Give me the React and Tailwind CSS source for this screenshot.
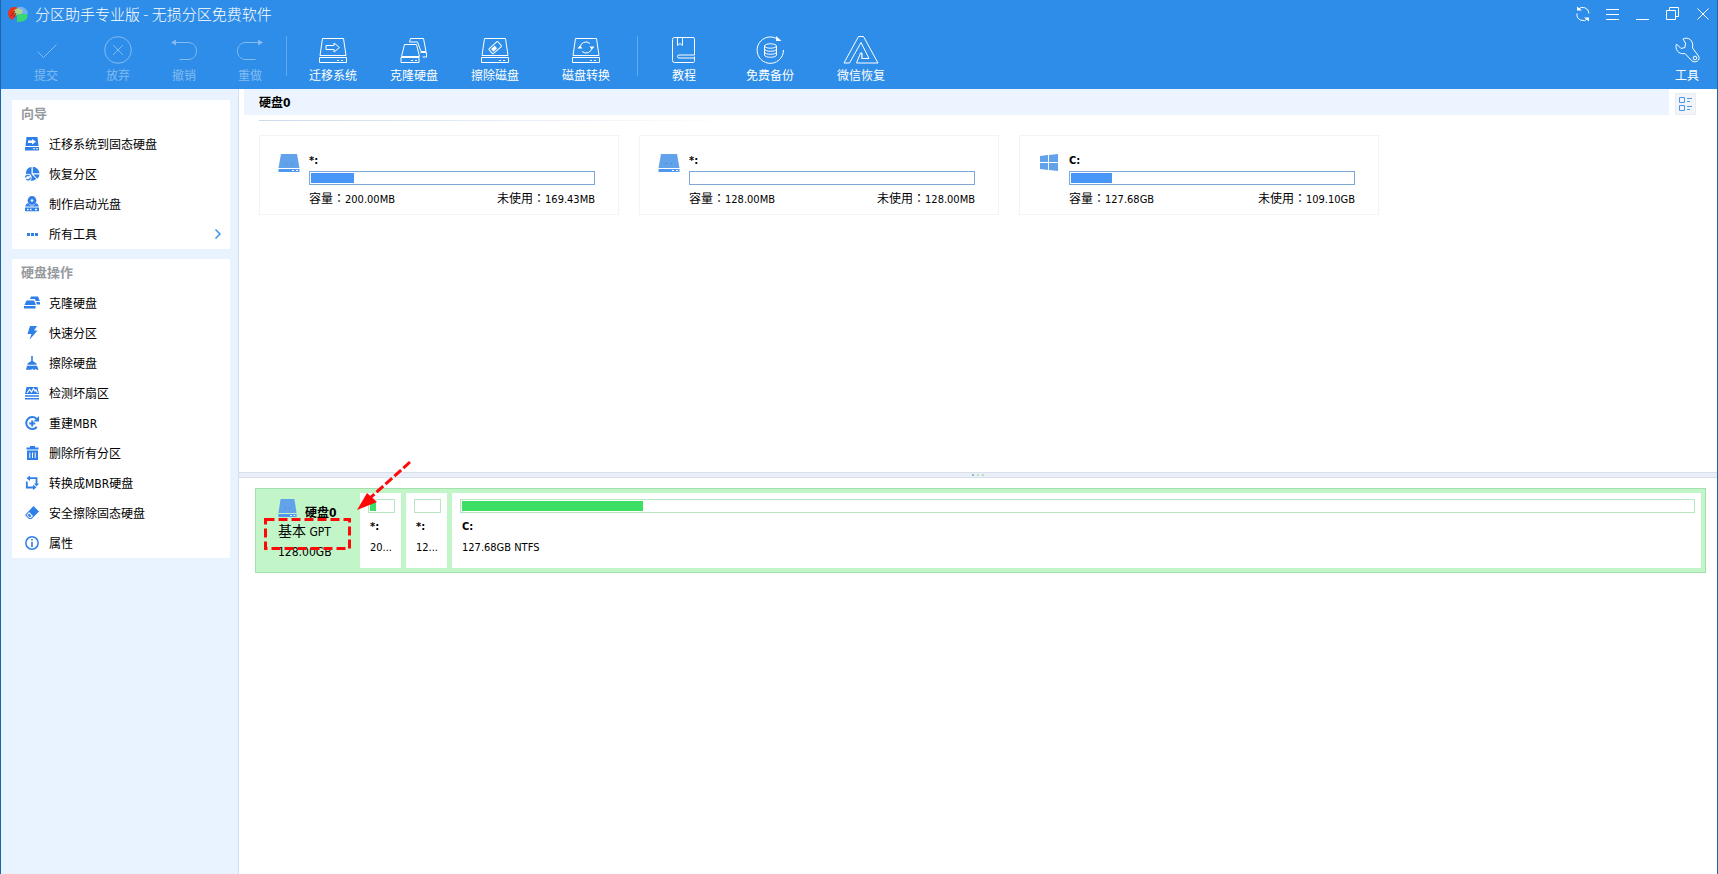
// App.jsx
import React from "react";

/* ---------- toolbar icons ---------- */

const Line = ({ children, w = 28, className = "" }) => (
  <svg
    width={w}
    height="28"
    viewBox={`0 0 ${w} 28`}
    fill="none"
    stroke="currentColor"
    strokeWidth="1"
    className={className}
    aria-hidden="true"
  >
    {children}
  </svg>
);

const DiskFrame = () => (
  <>
    <path d="M3.500 2.500h21l2.500 17H1z" />
    <path d="M.500 21.500h27v5h-27z" />
    <path d="M18 24.500h2M22 24.500h2" />
  </>
);

const CommitIcon = () => (
  <Line>
    <path d="M5.500 15.500l6 6L24.500 8.500" />
  </Line>
);

const DiscardIcon = () => (
  <Line>
    <circle cx="14" cy="14" r="13.300" />
    <path d="M9 9l10 10M19 9L9 19" />
  </Line>
);

const UndoIcon = () => (
  <Line>
    <path d="M4 6.500h15c10 1 10 16 0 17H9.500" />
    <path d="M1 6.500l5-3v6z" fill="currentColor" stroke="none" />
  </Line>
);

const RedoIcon = () => (
  <Line>
    <path d="M24 6.500H9c-10 1-10 16 0 17h10.500" />
    <path d="M27 6.500l-5-3v6z" fill="currentColor" stroke="none" />
  </Line>
);

const MigrateIcon = () => (
  <Line>
    <DiskFrame />
    <path d="M7 9.500h8V7l5.500 4.500L15 16v-2.500H7z" />
  </Line>
);

const CloneIcon = () => (
  <Line>
    <path d="M4.500 8.500h12l3 12H1.500z" />
    <path d="M1 21.500h18v5H1z" />
    <path d="M11 24.500h2M15 24.500h2" />
    <path d="M9.500 6l1-3.500h13l2.500 13h-5L17.500 6z" />
    <path d="M20.500 16.500H26.500v4.500h-4" />
  </Line>
);

const WipeIcon = () => (
  <Line>
    <DiskFrame />
    <g transform="rotate(-42 14 11.500)">
      <rect x="8" y="8.500" width="12" height="6.500" rx="1" />
      <rect x="10" y="10" width="5" height="3.500" fill="currentColor" stroke="none" />
    </g>
  </Line>
);

const ConvertIcon = () => (
  <Line>
    <DiskFrame />
    <path d="M8 11.500a6 6 0 0 1 10-4M20 11.500a6 6 0 0 1-10 4" />
    <path d="M17.500 10.500h5L20 13.500zM5.500 12.500h5L8 9.500z" fill="currentColor" stroke="none" />
  </Line>
);

const BookIcon = () => (
  <Line>
    <path d="M24.500 20.500v4a1.500 1.500 0 0 1-1.500 2H4.500a2 2 0 0 1-2-2v-21a2 2 0 0 1 2-2H23a1.500 1.500 0 0 1 1.500 1.500v16H9a1.500 1.500 0 0 0 0 3h15" />
    <path d="M7.500 1.500v8l2.500-2 2.500 2v-8" />
  </Line>
);

const BackupIcon = () => (
  <Line>
    <path d="M20.500 2.500A13.200 13.200 0 1 0 27.500 14" />
    <path d="M20 0v5h5.500z" fill="currentColor" stroke="none" />
    <ellipse cx="14.500" cy="10" rx="6" ry="2.200" />
    <path d="M8.500 10v9c0 3 12 3 12 0v-9M8.500 13c0 3 12 3 12 0M8.500 16c0 3 12 3 12 0" />
  </Line>
);

const WechatIcon = () => (
  <Line w={36}>
    <path d="M1 27L15.500 .500h5L35 27H13.500l4-10h1.500v5.500h7L18 6.500 6.500 27z" />
    <path d="M18.500 17v5.500h7" opacity=".5" />
  </Line>
);

const WrenchIcon = () => (
  <Line w={26}>
    <path d="M9 3c5-2.500 11 1 9.500 9l6 8c2.500 4-3 8-7 4.500L11 17.500C4.500 19 .500 13 2.500 8l4.500 4.500 4-1 .500-4.500z" />
    <circle cx="21" cy="22" r="1.800" />
  </Line>
);

/* ---------- sidebar icons ---------- */

const Small = ({ children }) => (
  <svg width="16" height="16" viewBox="0 0 16 16" fill="#2f7fe8" aria-hidden="true">
    {children}
  </svg>
);

const SideIcons = {
  migrate: (
    <Small>
      <path d="M2.500 1h11l1 9h-13zM1 11h14v3.500H1z" />
      <path d="M4 4.500h4V3l4 2.800L8 8.500V7H4zM9 12.300h2v1H9zM12 12.300h2v1h-2z" fill="#fff" />
    </Small>
  ),
  restore: (
    <Small>
      <path d="M7.500 1v7l4.800 5A7 7 0 0 1 6.500 14.500 7 7 0 0 1 2 6.500 6.500 6.500 0 0 1 7.500 1z" />
      <path d="M8.800.800a7 7 0 0 1 6.700 6.400H8.800zM9.500 8.500h6a7 7 0 0 1-2.300 4.300z" />
      <circle cx="3.800" cy="11.500" r="3.800" fill="#fff" />
      <path d="M1.500 11.500a2.400 2.400 0 0 1 4-1.500M6.300 11.500a2.400 2.400 0 0 1-4 1.700" fill="none" stroke="#2f7fe8" strokeWidth="1.400" />
    </Small>
  ),
  boot: (
    <Small>
      <circle cx="8" cy="4.500" r="4.400" />
      <circle cx="8" cy="4.500" r="1.300" fill="#fff" />
      <path d="M2.500 8L4 7l2.500 2.500h3L12 7l1.500 1 1.500 2.500H1zM1 11.500h14v3.700H1z" />
      <path d="M3 12.800h1.500v1.500H3zM6 12.800h1.500v1.500H6zM11 12.800h2v1.500h-2z" fill="#fff" />
    </Small>
  ),
  dots: (
    <Small>
      <path d="M3 7h3v3H3zM7 7h3v3H7zM11 7h3v3h-3z" />
    </Small>
  ),
  clone: (
    <Small>
      <path d="M2.500 5.500h7.500L12 10H.500zM0 11h11.500v2.500H0z" />
      <path d="M7 1.500h7l1.800 4.500h-4L10.800 4H6zM12 7h4v2.500h-3z" />
    </Small>
  ),
  flash: (
    <Small>
      <path d="M6 1h7l-3 4.500h3.500L5.500 14.800 7.500 9H3.500z" />
    </Small>
  ),
  broom: (
    <Small>
      <path d="M7.200 1h1.600v5l3.700 2.500v1.200h-9V8.500L7.200 6zM3 10.700h10l1.500 4h-2l-1-1-.500 1H9l-.700-1.200-.800 1.200H2z" />
    </Small>
  ),
  check: (
    <Small>
      <path d="M2.500 2h11L15 9H1zM1 10.200h14v1.600H1zM1 13h14v1.600H1z" />
      <path d="M3 8l2.500-3.500L7.500 7l2-3.500L11 6l1-1 1.500 3" fill="none" stroke="#fff" strokeWidth="1.200" />
    </Small>
  ),
  rebuild: (
    <Small>
      <path d="M12.500 3.800A6 6 0 1 0 12.800 12" fill="none" stroke="#2f7fe8" strokeWidth="2" />
      <path d="M15 1v5.500H9.500zM7.200 5.500h2v2h2v2h-2v2h-2v-2h-2v-2h2z" />
    </Small>
  ),
  trash: (
    <Small>
      <path d="M6 1h5v1.500h3.500v2h-12v-2H6zM3 5.500h11V15H3z" />
      <path d="M5.300 7.500h1V13h-1zM8 7.500h1V13H8zM10.700 7.500h1V13h-1z" fill="#fff" />
    </Small>
  ),
  swap: (
    <Small>
      <path d="M2.800 6.500v6H9M5 3.200h7.500v6" fill="none" stroke="#2f7fe8" strokeWidth="1.800" />
      <path d="M6 .500v5.500L2.500 3.200zM9 9.500v5.500l3.500-2.500zM10 8.500h5l-2.500 3z" />
    </Small>
  ),
  eraser: (
    <Small>
      <path d="M9.500 1L15 6.500 7.500 14H5L1 10z" />
      <path d="M5 7l4 4-2 2H5.500L2.500 10z" fill="#fff" />
      <path d="M5 8.500L7.500 11l-1.500 1.500L3.500 10z" />
    </Small>
  ),
  info: (
    <Small>
      <circle cx="8" cy="8" r="6.200" fill="none" stroke="#2f7fe8" strokeWidth="1.500" />
      <path d="M7.200 4h1.600v1.600H7.200zM7.200 6.700h1.600V12H7.200z" />
    </Small>
  ),
};

const DriveIcon = ({ width = 22 }) => (
  <svg width={width} height="20" viewBox="0 0 22 20" preserveAspectRatio="none" aria-hidden="true">
    <path d="M3 1h16l2.500 14H.500z" fill="#62a2ea" />
    <path d="M.500 16h21v3H.500z" fill="#4f98ee" />
    <path d="M14 17h2v1h-2zM18 17h2v1h-2z" fill="#fff" />
    <path d="M8 10h1v1H8zM13 10h1v1h-1z" fill="#3f7fcf" />
  </svg>
);

const WindowsIcon = () => (
  <svg width="22" height="20" viewBox="0 0 22 20" fill="#62a2ea" aria-hidden="true">
    <path d="M2 3l8-1v7H2zM11 2l9-1v8h-9zM2 10h8v7l-8-1zM11 10h9v8l-9-1z" />
  </svg>
);

/* ---------- data ---------- */

const historyTools = [
  { label: "提交", icon: <CommitIcon />, width: "w-[72px]" },
  { label: "放弃", icon: <DiscardIcon />, width: "w-[72px]" },
  { label: "撤销", icon: <UndoIcon />, width: "w-[60px]" },
  { label: "重做", icon: <RedoIcon />, width: "w-[72px]" },
];

const diskTools = [
  { label: "迁移系统", icon: <MigrateIcon />, width: "w-[92px]" },
  { label: "克隆硬盘", icon: <CloneIcon />, width: "w-[70px]" },
  { label: "擦除磁盘", icon: <WipeIcon />, width: "w-[92px]" },
  { label: "磁盘转换", icon: <ConvertIcon />, width: "w-[90px]" },
];

const helpTools = [
  { label: "教程", icon: <BookIcon />, width: "w-[92px]" },
  { label: "免费备份", icon: <BackupIcon />, width: "w-[80px]" },
  { label: "微信恢复", icon: <WechatIcon />, width: "w-[102px]" },
];

const wizards = [
  { label: "迁移系统到固态硬盘", icon: "migrate" },
  { label: "恢复分区", icon: "restore" },
  { label: "制作启动光盘", icon: "boot" },
  { label: "所有工具", icon: "dots", more: true },
];

const diskActions = [
  { label: "克隆硬盘", icon: "clone" },
  { label: "快速分区", icon: "flash" },
  { label: "擦除硬盘", icon: "broom" },
  { label: "检测坏扇区", icon: "check" },
  { label: "重建MBR", icon: "rebuild" },
  { label: "删除所有分区", icon: "trash" },
  { label: "转换成MBR硬盘", icon: "swap" },
  { label: "安全擦除固态硬盘", icon: "eraser" },
  { label: "属性", icon: "info" },
];

const partitions = [
  { name: "*:", size: "200.00MB", free: "169.43MB", used: 15.3 },
  { name: "*:", size: "128.00MB", free: "128.00MB", used: 0 },
  { name: "C:", size: "127.68GB", free: "109.10GB", used: 14.5, system: true },
];

/* ---------- pieces ---------- */

const ToolButton = ({ label, icon, width, disabled }) => (
  <button
    disabled={disabled}
    className={`${width} flex shrink-0 flex-col items-center gap-1 whitespace-nowrap text-xs leading-4 ${
      disabled ? "text-[#82bbf2]" : "text-white"
    }`}
  >
    {icon}
    {label}
  </button>
);

const Separator = () => <div className="h-10 w-px shrink-0 bg-[#62aaf0]" />;

const SidePanel = ({ title, items }) => (
  <section className="bg-white">
    <h2 className="pt-[2px] pb-[3px] pl-[9px] text-[13px] leading-6 font-bold text-[#96999e]">{title}</h2>
    <ul>
      {items.map((item) => (
        <li key={item.label}>
          <button className="flex h-[30px] w-full items-center gap-[9px] pr-2 pl-3 text-xs text-black">
            {SideIcons[item.icon]}
            <span className="pt-[2px]">{item.label}</span>
            {item.more && (
              <svg width="8" height="12" viewBox="0 0 8 12" className="ml-auto" fill="none" stroke="#3d95ea" strokeWidth="1.500" aria-hidden="true">
                <path d="M1.500 1.500L6 6l-4.500 4.500" />
              </svg>
            )}
          </button>
        </li>
      ))}
    </ul>
  </section>
);

const Amount = ({ label, value }) => (
  <span>
    <span className="text-xs leading-4">
      {label}
      <span className="font-['Noto_Sans_CJK_TC',sans-serif]">：</span>
    </span>
    {value}
  </span>
);

const PartitionCard = ({ name, size, free, used, system }) => (
  <div className="flex h-20 w-[360px] gap-[9px] border border-[#f1f3f6] pt-[17px] pr-[23px] pl-[18px] text-[11px] leading-4 text-black">
    {system ? <WindowsIcon /> : <DriveIcon />}
    <div className="flex-1">
      <div className="pb-[2px] font-bold">{name}</div>
      <div className="h-[14px] border border-[#7fa8d8] p-px">
        <div className="h-full bg-[#4896f8]" style={{ width: `${used}%` }} />
      </div>
      <div className="flex justify-between pt-[5px]">
        <Amount label="容量" value={size} />
        <Amount label="未使用" value={free} />
      </div>
    </div>
  </div>
);

const MapBlock = ({ name, text, used, className }) => (
  <div className={`${className} h-[75px] bg-white px-[6px] pt-[6px] pl-2 text-[11px] leading-4 text-black`}>
    <div className="h-[14px] border border-[#b5e7c1] p-px">
      <div className="h-full bg-[#3bdf63]" style={{ width: `${used}%` }} />
    </div>
    <div className="pt-[6px] pl-[2px] font-bold">{name}</div>
    <div className="overflow-hidden pt-[5px] pl-[2px] whitespace-nowrap">{text}</div>
  </div>
);

const App = () => {
  return (
    <div className="flex min-h-screen flex-col border-x border-[#1766ae] bg-white font-['DejaVu_Sans_Condensed','Noto_Sans_CJK_SC',sans-serif]">
      <header className="bg-[#2e8de8] text-white">
        <div className="flex h-[27px] items-center pr-[6px] pl-[6px]">
          <svg width="22" height="20" viewBox="0 0 22 20" aria-hidden="true">
            <path d="M1 9C2 3 7 2 11 3.500l-1 7-5 5.500C2 14 1 12 1 9z" fill="#e8341c" />
            <path d="M10 3.500c5-2 10 .500 11 6l-4 2-7-3z" fill="#6fb0f5" />
            <path d="M7 6.500c3-3 7-2 9 0l-2 4-6 1z" fill="#a9d28a" />
            <path d="M10 10h10.500c.500 5-2 8-10.500 8z" fill="#37d873" />
            <path d="M4 12l4-5M7 13l2-4" stroke="#8c2416" />
          </svg>
          <h1 className="flex-1 pl-[6px] font-['Noto_Sans_CJK_SC',sans-serif] text-[15px] leading-6 font-light">
            分区助手专业版 - 无损分区免费软件
          </h1>
          <div className="flex items-center gap-[14px]">
            <button aria-label="刷新">
              <svg width="16" height="16" viewBox="0 0 16 16" fill="none" stroke="#fff" aria-hidden="true">
                <path d="M3 3.500a6.300 6.300 0 0 1 11 4M13 12.500a6.300 6.300 0 0 1-11-5" />
                <path d="M2 .500v4h5zM14 15.500v-4H9z" fill="#fff" stroke="none" />
              </svg>
            </button>
            <button aria-label="菜单">
              <svg width="16" height="16" viewBox="0 0 16 16" stroke="#fff" aria-hidden="true">
                <path d="M1 3.500h13M1 8.500h13M1 13.500h13" />
              </svg>
            </button>
            <button aria-label="最小化">
              <svg width="16" height="16" viewBox="0 0 16 16" stroke="#fff" aria-hidden="true">
                <path d="M1 13.500h13" />
              </svg>
            </button>
            <button aria-label="还原">
              <svg width="16" height="16" viewBox="0 0 16 16" fill="none" stroke="#fff" aria-hidden="true">
                <path d="M1.500 4.500h9v9h-9zM4.500 4.500v-3h9v9h-3" />
              </svg>
            </button>
            <button aria-label="关闭">
              <svg width="16" height="16" viewBox="0 0 16 16" stroke="#fff" aria-hidden="true">
                <path d="M2.500 2.500l11 11M13.500 2.500l-11 11" />
              </svg>
            </button>
          </div>
        </div>

        <nav className="flex h-[62px] items-start pt-[9px] pr-3 pl-[9px]">
          {historyTools.map((tool) => (
            <ToolButton key={tool.label} {...tool} disabled />
          ))}
          <Separator />
          {diskTools.map((tool) => (
            <ToolButton key={tool.label} {...tool} />
          ))}
          <div className="pl-[6px]">
            <Separator />
          </div>
          {helpTools.map((tool) => (
            <ToolButton key={tool.label} {...tool} />
          ))}
          <div className="ml-auto">
            <ToolButton label="工具" icon={<WrenchIcon />} width="w-9" />
          </div>
        </nav>
      </header>

      <div className="flex flex-1">
        <aside className="flex w-[238px] shrink-0 flex-col gap-[10px] border-r border-[#d5dfee] bg-[#e9f2ff] pt-[11px] pr-2 pl-[11px]">
          <SidePanel title="向导" items={wizards} />
          <SidePanel title="硬盘操作" items={diskActions} />
        </aside>

        <main className="flex min-w-0 flex-1 flex-col">
          <section className="min-h-[383px] pl-[5px]">
            <div className="flex">
              <h2 className="h-[26px] flex-1 bg-[#ecf5ff] pt-px pl-[15px] text-xs leading-[26px] font-bold text-black">
                硬盘0
              </h2>
              <button aria-label="视图" className="mt-1 mr-[21px] ml-[6px] flex h-[22px] w-[21px] items-center justify-center border border-[#e9edf3] bg-[#f2f4f8]">
                <svg width="15" height="16" viewBox="0 0 15 16" fill="none" stroke="#4896f0" aria-hidden="true">
                  <path d="M1.500 1.500h5v5h-5zM1.500 9.500h5v5h-5zM9 2.500h5M9 5.500h3M9 10.500h5M9 13.500h3" />
                </svg>
              </button>
            </div>
            <div className="mt-[5px] ml-[15px] h-px w-[480px] bg-gradient-to-r from-[#cddaec] to-white" />
            <div className="mt-[14px] ml-[15px] flex flex-wrap gap-5">
              {partitions.map((p) => (
                <PartitionCard key={`${p.name}${p.size}`} {...p} />
              ))}
            </div>
          </section>

          <div className="flex h-[6px] items-center justify-center gap-[3px] border-y border-[#d8e0ec] bg-[#e9eef7]">
            <span className="h-[2px] w-[2px] bg-[#8fbfae]" />
            <span className="h-[2px] w-[2px] bg-[#b4e2c0]" />
            <span className="h-[2px] w-[2px] bg-[#b4e2c0]" />
          </div>

          <section className="flex-1 pt-[10px] pr-[11px] pl-4">
            <div className="relative flex gap-[5px] border border-[#a4dfb0] bg-[#c2f6c9] p-1">
              <div className="w-[95px] pt-[5px] pl-[18px] text-black">
                <div className="flex gap-2">
                  <DriveIcon width={19} />
                  <span className="pt-[7px] text-xs leading-4 font-bold">硬盘0</span>
                </div>
                <div className="text-xs leading-5">
                  <span className="text-[14px]">基本</span> GPT
                </div>
                <div className="text-xs leading-5">128.00GB</div>
              </div>
              <MapBlock name="*:" text="20..." used={26} className="w-[41px]" />
              <MapBlock name="*:" text="12..." used={0} className="w-[41px]" />
              <MapBlock name="C:" text="127.68GB NTFS" used={14.7} className="flex-1" />

              <svg width="160" height="96" viewBox="0 0 160 96" className="absolute -top-[30px] left-[6px]" fill="none" stroke="#ff0808" strokeWidth="3" aria-hidden="true">
                <rect x="3.500" y="60.500" width="84" height="29" strokeDasharray="9 4" />
                <path d="M148 3L108 39" strokeDasharray="9 3" />
                <path d="M95 51l10-17 10 9z" fill="#ff0808" stroke="none" />
              </svg>
            </div>
          </section>
        </main>
      </div>
    </div>
  );
};

export default App;
